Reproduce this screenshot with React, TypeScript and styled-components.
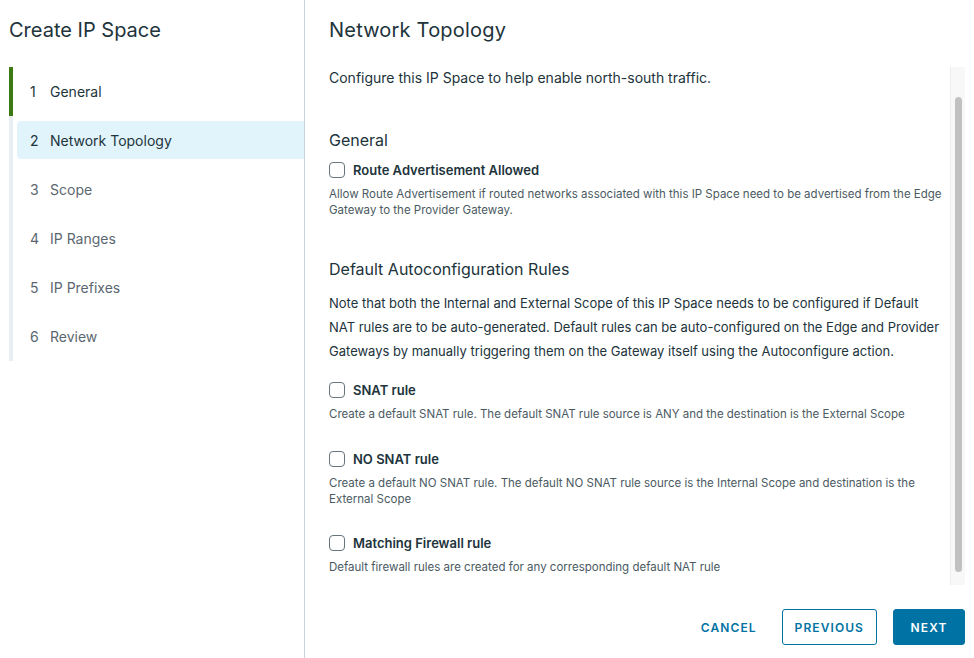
import React from "react";
import styled, { createGlobalStyle } from "styled-components";

const Global = createGlobalStyle`
  html, body { margin: 0; padding: 0; background: #fff; }
  body { font-family: Inter, "Noto Sans", sans-serif; color: #21333b; }
  #root { height: 658px; }
  * { box-sizing: border-box; }
`;

const Page = styled.div`
  display: flex;
  height: 658px;
  width: 974px;
  overflow: hidden;
`;

const Sidebar = styled.aside`
  width: 305px;
  flex: none;
  border-right: 1px solid #c9d3d8;
  padding: 0 0 0 9px;
  display: flex;
  flex-direction: column;
`;

const SideTitle = styled.h1`
  margin: 0;
  height: 67px;
  padding-top: 17px;
  font-size: 20px;
  font-weight: 400;
  line-height: 26px;
  color: #21333b;
`;

const StepList = styled.ol`
  list-style: none;
  margin: 0;
  padding: 0;
`;

const StepItem = styled.li<{ $done?: boolean }>`
  height: 49px;
  padding: 5px 0 6px 4px;
  border-left: 4px solid ${(p) => (p.$done ? "#3d7a13" : "#e8eef1")};
`;

const StepButton = styled.div<{ $active?: boolean; $muted?: boolean }>`
  height: 38px;
  display: flex;
  align-items: center;
  padding-left: 13px;
  gap: 12px;
  font-size: 14px;
  border-radius: 4px 0 0 4px;
  background: ${(p) => (p.$active ? "#e1f4fc" : "transparent")};
  color: ${(p) => (p.$muted ? "#5b6770" : "#21333b")};
`;

const StepNum = styled.span`
  width: 8px;
`;

const Main = styled.main`
  flex: 1;
  min-width: 0;
  display: flex;
  flex-direction: column;
  padding: 0 9px 0 24px;
`;

const MainTitle = styled.h2`
  margin: 0;
  height: 67px;
  padding-top: 17px;
  font-size: 20px;
  font-weight: 400;
  line-height: 26px;
  letter-spacing: 0.01em;
  color: #21333b;
`;

const Scroll = styled.div`
  height: 518px;
  flex: none;
  display: flex;
  overflow: hidden;
`;

const Content = styled.div`
  flex: 1;
  min-width: 0;
  padding-right: 4px;
`;

const Track = styled.div`
  width: 15px;
  flex: none;
  background: #f8f8f8;
  border-left: 1px solid #ededed;
  padding: 30px 3px 13px 4px;
  display: flex;
`;

const Thumb = styled.div`
  flex: 1;
  background: #c1c1c1;
  border-radius: 4px;
`;

const Lead = styled.p`
  margin: 0;
  font-size: 14px;
  line-height: 22px;
  color: #21333b;
`;

const Section = styled.h3<{ $top: number }>`
  margin: ${(p) => p.$top}px 0 0;
  font-size: 16px;
  font-weight: 400;
  line-height: 24px;
  color: #21333b;
`;

const Para = styled.p`
  margin: 10px 0 0;
  font-size: 13px;
  line-height: 24px;
  color: #21333b;
`;

const CheckRow = styled.label<{ $top: number }>`
  margin-top: ${(p) => p.$top}px;
  height: 24px;
  display: flex;
  align-items: center;
  gap: 8px;
  font-size: 13px;
  font-weight: 600;
  color: #21333b;
`;

const Box = styled.span`
  width: 16px;
  height: 16px;
  border: 1px solid #66747c;
  border-radius: 4px;
  background: #fff;
  flex: none;
`;

const Help = styled.p`
  margin: 4px 0 0;
  font-size: 11.5px;
  line-height: 16px;
  color: #4b5a62;
`;

const Footer = styled.footer`
  flex: 1;
  display: flex;
  justify-content: flex-end;
  align-items: flex-start;
  padding-top: 24px;
  gap: 12px;
`;

const Btn = styled.button<{ $kind: "flat" | "outline" | "solid" }>`
  height: 36px;
  min-width: 72px;
  padding: 0 12px;
  font-family: inherit;
  font-size: 12px;
  font-weight: 600;
  letter-spacing: 0.09em;
  text-transform: uppercase;
  border-radius: 3px;
  cursor: pointer;
  border: 1px solid ${(p) => (p.$kind === "flat" ? "transparent" : "#0072a3")};
  background: ${(p) => (p.$kind === "solid" ? "#0072a3" : "#fff")};
  color: ${(p) => (p.$kind === "solid" ? "#fff" : "#0072a3")};
  margin-left: ${(p) => (p.$kind === "solid" ? "4px" : "0")};
`;

const steps = ["General", "Network Topology", "Scope", "IP Ranges", "IP Prefixes", "Review"];

function Check({ top, label }: { top: number; label: string }) {
  return (
    <CheckRow $top={top}>
      <Box />
      {label}
    </CheckRow>
  );
}

export default function App() {
  return (
    <>
      <Global />
      <Page>
        <Sidebar>
          <SideTitle>Create IP Space</SideTitle>
          <StepList>
            {steps.map((s, i) => (
              <StepItem key={s} $done={i === 0}>
                <StepButton $active={i === 1} $muted={i > 1}>
                  <StepNum>{i + 1}</StepNum>
                  <span>{s}</span>
                </StepButton>
              </StepItem>
            ))}
          </StepList>
        </Sidebar>
        <Main>
          <MainTitle>Network Topology</MainTitle>
          <Scroll>
            <Content>
              <Lead>Configure this IP Space to help enable north-south traffic.</Lead>
              <Section $top={39}>General</Section>
              <Check top={6} label="Route Advertisement Allowed" />
              <Help>
                Allow Route Advertisement if routed networks associated with this IP Space need to be advertised from the Edge Gateway to the Provider Gateway.
              </Help>
              <Section $top={39}>Default Autoconfiguration Rules</Section>
              <Para>
                Note that both the Internal and External Scope of this IP Space needs to be configured if Default NAT rules are to be auto-generated. Default rules can be auto-configured on the Edge and Provider Gateways by manually triggering them on the Gateway itself using the Autoconfigure action.
              </Para>
              <Check top={15} label="SNAT rule" />
              <Help>
                Create a default SNAT rule. The default SNAT rule source is ANY and the destination is the External Scope
              </Help>
              <Check top={25} label="NO SNAT rule" />
              <Help>
                Create a default NO SNAT rule. The default NO SNAT rule source is the Internal Scope and destination is the External Scope
              </Help>
              <Check top={24} label="Matching Firewall rule" />
              <Help>Default firewall rules are created for any corresponding default NAT rule</Help>
            </Content>
            <Track>
              <Thumb />
            </Track>
          </Scroll>
          <Footer>
            <Btn $kind="flat">Cancel</Btn>
            <Btn $kind="outline">Previous</Btn>
            <Btn $kind="solid">Next</Btn>
          </Footer>
        </Main>
      </Page>
    </>
  );
}
